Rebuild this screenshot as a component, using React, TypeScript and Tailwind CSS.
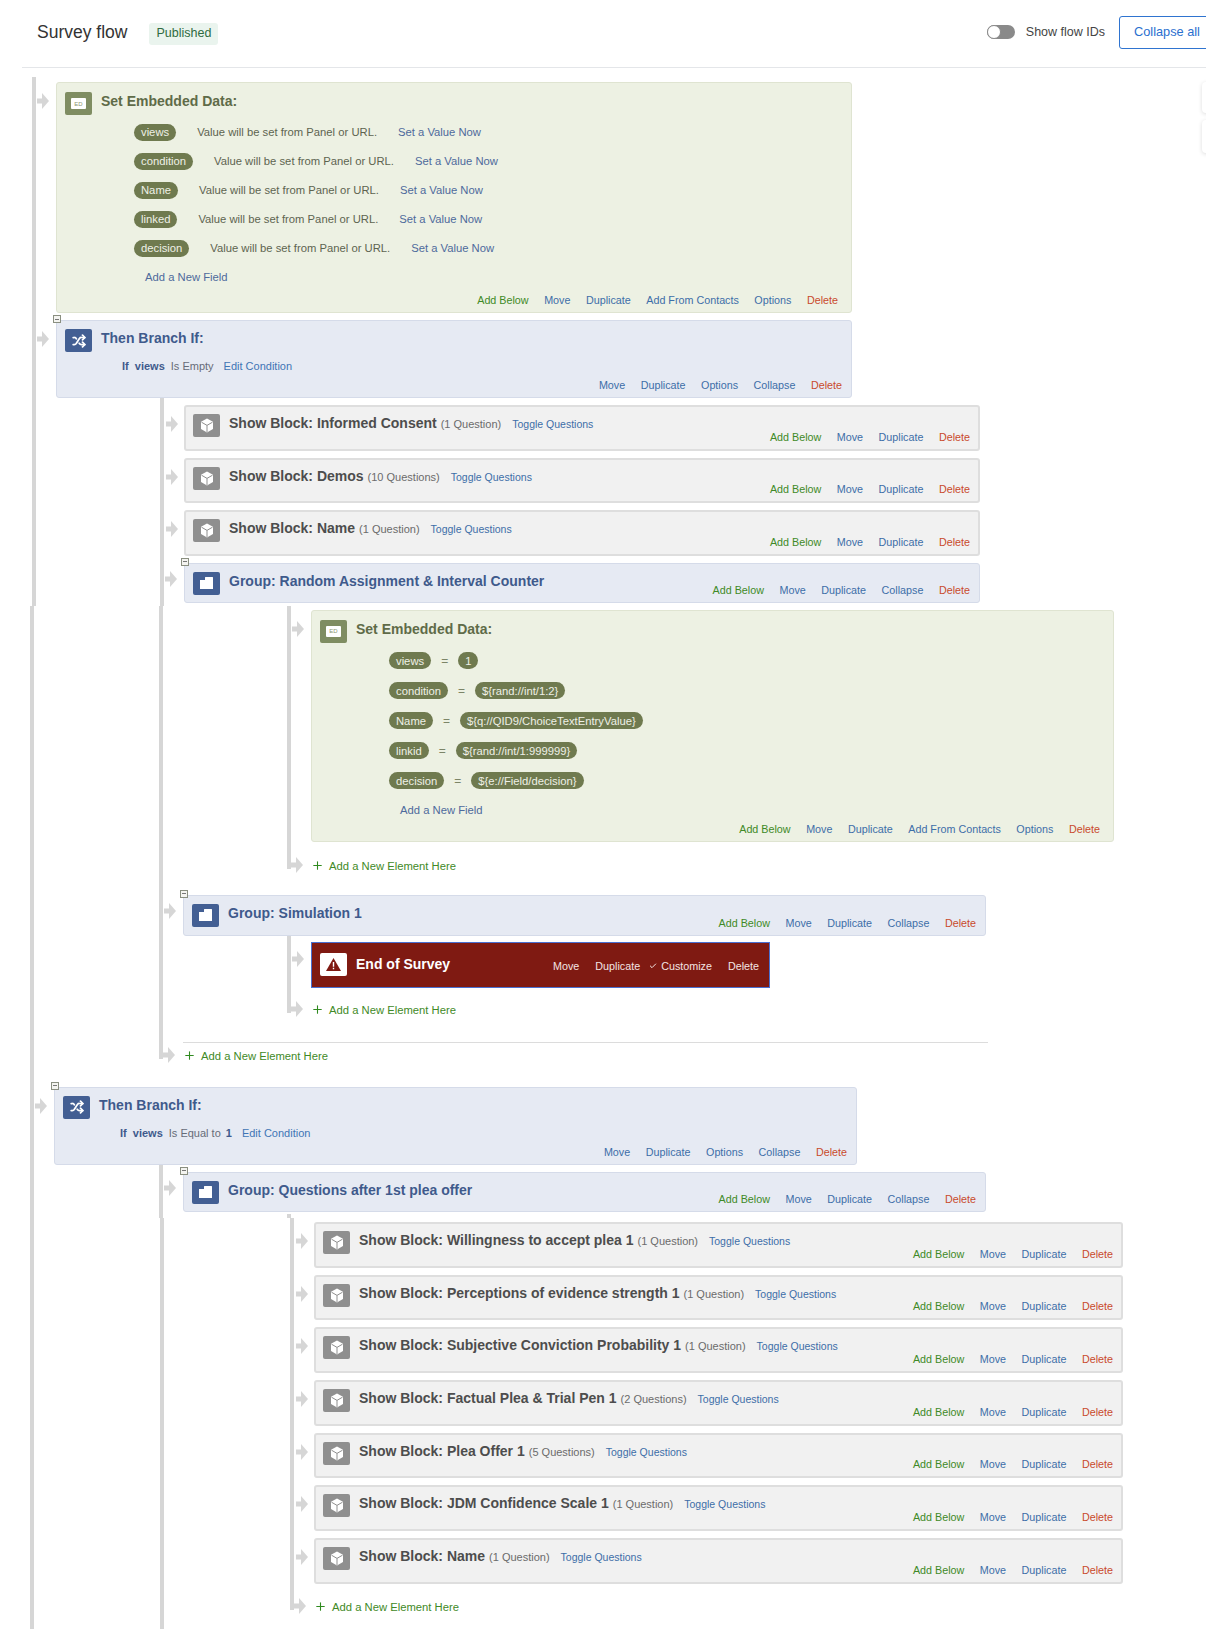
import type { ReactNode } from "react";
import { Check, Plus, Shuffle } from "lucide-react";

type Tone = "green" | "blue" | "gray";

const TONES: Record<Tone, string> = {
  green: "bg-[#edf1e3] border-[#dfe4d1]",
  blue: "bg-[#e6eaf3] border-[#d5dbe9]",
  gray: "bg-[#f1f1f1] border-[#dedede]",
};

const ICON_TONES: Record<Tone, string> = {
  green: "bg-[#7f8d62]",
  blue: "bg-[#435f93]",
  gray: "bg-[#8f8f8f]",
};

const TITLE_TONES: Record<Tone, string> = {
  green: "text-[#5f6b48]",
  blue: "text-[#3f5a8c]",
  gray: "text-[#4d4d4d]",
};

const ACTION_COLORS: Record<string, string> = {
  "Add Below": "text-[#3f8a27]",
  Delete: "text-[#c94a2c]",
};

const firstFields = ["views", "condition", "Name", "linked", "decision"];

const secondFields = [
  ["views", "1"],
  ["condition", "${rand://int/1:2}"],
  ["Name", "${q://QID9/ChoiceTextEntryValue}"],
  ["linkid", "${rand://int/1:999999}"],
  ["decision", "${e://Field/decision}"],
];

const firstBlocks = [
  ["Informed Consent", "(1 Question)"],
  ["Demos", "(10 Questions)"],
  ["Name", "(1 Question)"],
];

const lastBlocks = [
  ["Willingness to accept plea 1", "(1 Question)"],
  ["Perceptions of evidence strength 1", "(1 Question)"],
  ["Subjective Conviction Probability 1", "(1 Question)"],
  ["Factual Plea & Trial Pen 1", "(2 Questions)"],
  ["Plea Offer 1", "(5 Questions)"],
  ["JDM Confidence Scale 1", "(1 Question)"],
  ["Name", "(1 Question)"],
];

function Arrow({ className }: { className: string }) {
  return (
    <svg width="12" height="16" viewBox="0 0 12 16" className={`absolute left-[-20px] ${className}`}>
      <path d="M0 5.5H5V0L12 8L5 16V10.5H0Z" fill="#d6d6d6" />
    </svg>
  );
}

function CollapseBox() {
  return (
    <div className="absolute left-[-4px] top-[-6px] flex h-[8px] w-[8px] items-center justify-center border border-[#8a8f80] bg-[#f4f4f0]">
      <div className="h-px w-[4px] bg-[#777]" />
    </div>
  );
}

function CubeGlyph() {
  return (
    <svg width="14" height="15" viewBox="0 0 14 15">
      <path d="M7 .5L13 3.8V11L7 14.5L1 11V3.8Z" fill="#fff" />
      <path d="M1.5 4.2L7 7.4L12.5 4.2M7 7.4V14" stroke="#8f8f8f" strokeWidth="1" fill="none" />
    </svg>
  );
}

function FolderGlyph() {
  return (
    <svg width="13" height="12" viewBox="0 0 13 12">
      <path d="M0 3H5V.5C5 .2 5.2 0 5.5 0H12.5C12.8 0 13 .2 13 .5V12H0Z" fill="#fff" />
    </svg>
  );
}

function EdGlyph() {
  return (
    <div className="flex h-[11px] w-[15px] items-center justify-center rounded-[1px] bg-white text-[6px] leading-none text-[#8b9572]">
      ED
    </div>
  );
}

function CardIcon({ tone, children }: { tone: Tone; children: ReactNode }) {
  return (
    <div className={`flex h-[23px] w-[27px] shrink-0 items-center justify-center rounded-[2px] ${ICON_TONES[tone]}`}>
      {children}
    </div>
  );
}

function Actions({ items, className = "" }: { items: string[]; className?: string }) {
  return (
    <div className={`mb-[5px] flex h-[14px] shrink-0 items-center gap-[15.5px] self-end text-[10.75px] leading-[14px] ${className}`}>
      {items.map((item) => (
        <span key={item} className={ACTION_COLORS[item] ?? "text-[#3d6ea8]"}>
          {item}
        </span>
      ))}
    </div>
  );
}

function Title({ tone, children }: { tone: Tone; children: ReactNode }) {
  return <div className={`-mt-px whitespace-nowrap text-[14px] font-bold leading-5 ${TITLE_TONES[tone]}`}>{children}</div>;
}

function Block({ name, count, width, actionsClass }: { name: string; count: string; width: string; actionsClass: string }) {
  return (
    <div className={`relative flex h-[45.67px] justify-between rounded-[3px] border-2 pl-[7px] pt-[7px] ${width} ${TONES.gray}`}>
      <Arrow className="top-[9px]" />
      <div className="flex gap-[9px]">
        <CardIcon tone="gray">
          <CubeGlyph />
        </CardIcon>
        <div className="flex items-baseline">
          <Title tone="gray">Show Block: {name}</Title>
          <span className="ml-1 whitespace-nowrap text-[11px] text-[#6b6b6b]">{count}</span>
          <span className="ml-[11px] whitespace-nowrap text-[10.5px] text-[#3d6ea8]">Toggle Questions</span>
        </div>
      </div>
      <Actions items={["Add Below", "Move", "Duplicate", "Delete"]} className={actionsClass} />
    </div>
  );
}

function Group({ title, width, height, collapseBox = true }: { title: string; width: string; height: string; collapseBox?: boolean }) {
  return (
    <div className={`relative flex justify-between rounded-[3px] border pl-[8px] pr-[9px] pt-[8px] ${width} ${height} ${TONES.blue}`}>
      <Arrow className="top-[7px]" />
      {collapseBox && <CollapseBox />}
      <div className="flex gap-[9px]">
        <CardIcon tone="blue">
          <FolderGlyph />
        </CardIcon>
        <Title tone="blue">{title}</Title>
      </div>
      <Actions items={["Add Below", "Move", "Duplicate", "Collapse", "Delete"]} className="mb-[4px]" />
    </div>
  );
}

function Branch({ width, condition, actionsClass }: { width: string; condition: ReactNode; actionsClass: string }) {
  return (
    <div className={`relative flex h-[78px] flex-col rounded-[3px] border pl-[8px] pt-[8px] ${width} ${TONES.blue}`}>
      <Arrow className="top-[10px]" />
      <CollapseBox />
      <div className="flex gap-[9px]">
        <CardIcon tone="blue">
          <Shuffle size={14} strokeWidth={3} color="#fff" />
        </CardIcon>
        <Title tone="blue">Then Branch If:</Title>
      </div>
      <div className="ml-[57px] mt-[7px] flex h-[14px] items-center whitespace-nowrap text-[11px]">{condition}</div>
      <Actions items={["Move", "Duplicate", "Options", "Collapse", "Delete"]} className={`mt-auto ${actionsClass}`} />
    </div>
  );
}

function Pill({ children }: { children: ReactNode }) {
  return (
    <span className="flex h-[17px] items-center whitespace-nowrap rounded-full bg-[#6f7a4f] px-[7px] text-[11.25px] text-[#eef0e6]">
      {children}
    </span>
  );
}

function EmbeddedCard({ width, height, children }: { width: string; height: string; children: ReactNode }) {
  return (
    <div className={`relative flex flex-col rounded-[3px] border pl-[8px] pr-[13px] pt-[9px] ${width} ${height} ${TONES.green}`}>
      <Arrow className="top-[10px]" />
      <div className="flex gap-[9px]">
        <CardIcon tone="green">
          <EdGlyph />
        </CardIcon>
        <Title tone="green">Set Embedded Data:</Title>
      </div>
      {children}
      <Actions items={["Add Below", "Move", "Duplicate", "Add From Contacts", "Options", "Delete"]} className="mt-auto" />
    </div>
  );
}

function AddRow({ className = "" }: { className?: string }) {
  return (
    <div className={`relative flex h-2 items-center ${className}`}>
      <Arrow className="top-[-4px]" />
      <div className="mt-[3px] flex items-center gap-[5px] whitespace-nowrap text-[11.25px] text-[#3f8a27]">
        <Plus size={13} strokeWidth={2} color="#2f8a1f" className="-mt-[2px]" />
        Add a New Element Here
      </div>
    </div>
  );
}

function AddField() {
  return <div className="ml-[80px] mt-[13px] h-[14px] text-[11.25px] leading-[14px] text-[#4d6a9c]">Add a New Field</div>;
}

export default function App() {
  return (
    <div className="relative h-[1646px] w-[1206px] overflow-hidden bg-white font-['Liberation_Sans',Arial,sans-serif]">
      <div className="absolute left-[1202px] top-[82px] h-[31px] w-[10px] rounded-l bg-white shadow-[0_1px_4px_rgba(0,0,0,0.14)]" />
      <div className="absolute left-[1202px] top-[120px] h-[33px] w-[10px] rounded-l bg-white shadow-[0_1px_4px_rgba(0,0,0,0.14)]" />

      <header className="ml-[22px] flex h-[68px] items-center justify-between border-b border-[#e4e6e9] pl-[15px]">
        <div className="flex items-center">
          <h1 className="-mt-[3px] text-[17.5px] font-normal text-[#333]">Survey flow</h1>
          <span className="ml-[22px] flex h-[22px] items-center rounded-[3px] bg-[#eaf4ee] px-[7px] text-[12.5px] text-[#2e6b3f]">
            Published
          </span>
        </div>
        <div className="-mr-[13px] -mt-[3px] flex items-center">
          <div className="flex h-[14px] w-[28px] rounded-full bg-[#8a8a8a]">
            <div className="h-[14px] w-[14px] rounded-full border border-[#8a8a8a] bg-white" />
          </div>
          <span className="ml-[11px] text-[12.5px] text-[#444]">Show flow IDs</span>
          <button className="ml-[14px] h-[33px] w-[100px] rounded-[3px] border border-[#2f74d0] pl-[14px] text-left text-[12.75px] text-[#2a6fcf]">
            Collapse all
          </button>
        </div>
      </header>

      <section className="ml-[32px] mt-[9px] border-l-4 border-[#d6d6d6] pl-5 pt-[5px]">
        <EmbeddedCard width="w-[796px]" height="h-[231px]">
          <div className="ml-[69px] mt-[9px] flex flex-col gap-[12px]">
            {firstFields.map((field) => (
              <div key={field} className="flex items-center gap-[21px] text-[11.25px] text-[#5d6450]">
                <Pill>{field}</Pill>
                <span className="whitespace-nowrap">Value will be set from Panel or URL.</span>
                <span className="whitespace-nowrap text-[#4d6a9c]">Set a Value Now</span>
              </div>
            ))}
          </div>
          <AddField />
        </EmbeddedCard>
        <div className="mt-[7px]">
          <Branch
            width="w-[796px]"
            actionsClass="mr-[9px]"
            condition={
              <>
                <b className="text-[#3f5a8c]">If&nbsp; views</b>
                <span className="ml-1.5 text-[#666c78]">Is Empty</span>
                <span className="ml-[10px] text-[#3f75b5]">Edit Condition</span>
              </>
            }
          />
        </div>
        <div className="ml-[104px] flex flex-col gap-[7px] border-l-4 border-[#d6d6d6] pb-[2.5px] pl-5 pt-[7px]">
          {firstBlocks.map(([name, count]) => (
            <Block key={name} name={name} count={count} width="w-[796px]" actionsClass="mr-[8px]" />
          ))}
          <Group title="Group: Random Assignment & Interval Counter" width="w-[796px]" height="h-[40.5px]" />
        </div>
      </section>

      <section className="ml-[30px] border-l-4 border-[#d6d6d6] pl-5">
        <div className="ml-[105px] w-[807px] border-l-4 border-[#d6d6d6] pl-5">
          <div className="ml-[104px] w-[830px] border-l-4 border-[#d6d6d6] pl-5 pt-[4px]">
            <EmbeddedCard width="w-[803px]" height="h-[232px]">
              <div className="ml-[69px] mt-[9px] flex flex-col gap-[12px]">
                {secondFields.map(([field, value]) => (
                  <div key={field} className="flex items-center gap-[10px] text-[12px] text-[#7c8568]">
                    <Pill>{field}</Pill>
                    <span>=</span>
                    <Pill>{value}</Pill>
                  </div>
                ))}
              </div>
              <AddField />
            </EmbeddedCard>
            <AddRow className="mt-[19px]" />
          </div>
          <div className="mt-[26px]">
            <Group title="Group: Simulation 1" width="w-[803px]" height="h-[41px]" />
          </div>
          <div className="ml-[104px] w-[500px] border-l-4 border-[#d6d6d6] pl-5 pt-[6px]">
            <div className="relative flex h-[46px] w-[459px] items-center justify-between border border-[#4a6fd0] bg-[#7f1a12] pl-[8px] pr-[10px]">
              <Arrow className="top-[8px]" />
              <div className="flex items-center gap-[9px]">
                <div className="flex h-[23px] w-[27px] items-center justify-center rounded-[2px] bg-white">
                  <svg width="15" height="13" viewBox="0 0 15 13">
                    <path d="M7.5 0L15 13H0Z" fill="#7f1a12" />
                    <path d="M6.8 4H8.2V8.8H6.8ZM6.8 9.8H8.2V11.2H6.8Z" fill="#fff" />
                  </svg>
                </div>
                <span className="text-[14px] font-bold text-white">End of Survey</span>
              </div>
              <div className="mt-[2px] flex items-center text-[10.75px] text-[#f3e4e2]">
                <span>Move</span>
                <span className="ml-[16px]">Duplicate</span>
                <Check size={8} strokeWidth={3} color="#f3e4e2" className="ml-[9px]" />
                <span className="ml-[4px]">Customize</span>
                <span className="ml-[16px]">Delete</span>
              </div>
            </div>
            <AddRow className="mt-[17px]" />
          </div>
          <div className="mt-[29px] h-px w-[805px] bg-[#dcdcdc]" />
          <AddRow className="mt-[8px]" />
        </div>
        <div className="mt-[28px]">
          <Branch
            width="w-[803px]"
            actionsClass="mr-[9px]"
            condition={
              <>
                <b className="text-[#3f5a8c]">If&nbsp; views</b>
                <span className="ml-1.5 text-[#666c78]">Is Equal to</span>
                <b className="ml-[5px] text-[#3f5a8c]">1</b>
                <span className="ml-[10px] text-[#3f75b5]">Edit Condition</span>
              </>
            }
          />
        </div>
        <div className="ml-[105px] border-l-4 border-[#d6d6d6] pl-5 pt-[7px]">
          <Group title="Group: Questions after 1st plea offer" width="w-[803px]" height="h-[40px]" />
          <div className="ml-[104px] mt-[2px] h-[4px] w-[4px] bg-[#d6d6d6]" />
        </div>
      </section>

      <section className="ml-[30px] border-l-4 border-[#d6d6d6]">
        <div className="ml-[126px] border-l-4 border-[#d6d6d6] pb-[19px]">
          <div className="ml-[126px] flex flex-col gap-[7px] border-l-4 border-[#d6d6d6] pl-5 pt-[4px]">
            {lastBlocks.map(([name, count]) => (
              <Block key={name} name={name} count={count} width="w-[809px]" actionsClass="mr-[8px]" />
            ))}
            <AddRow className="mt-[11px]" />
          </div>
        </div>
      </section>
    </div>
  );
}
